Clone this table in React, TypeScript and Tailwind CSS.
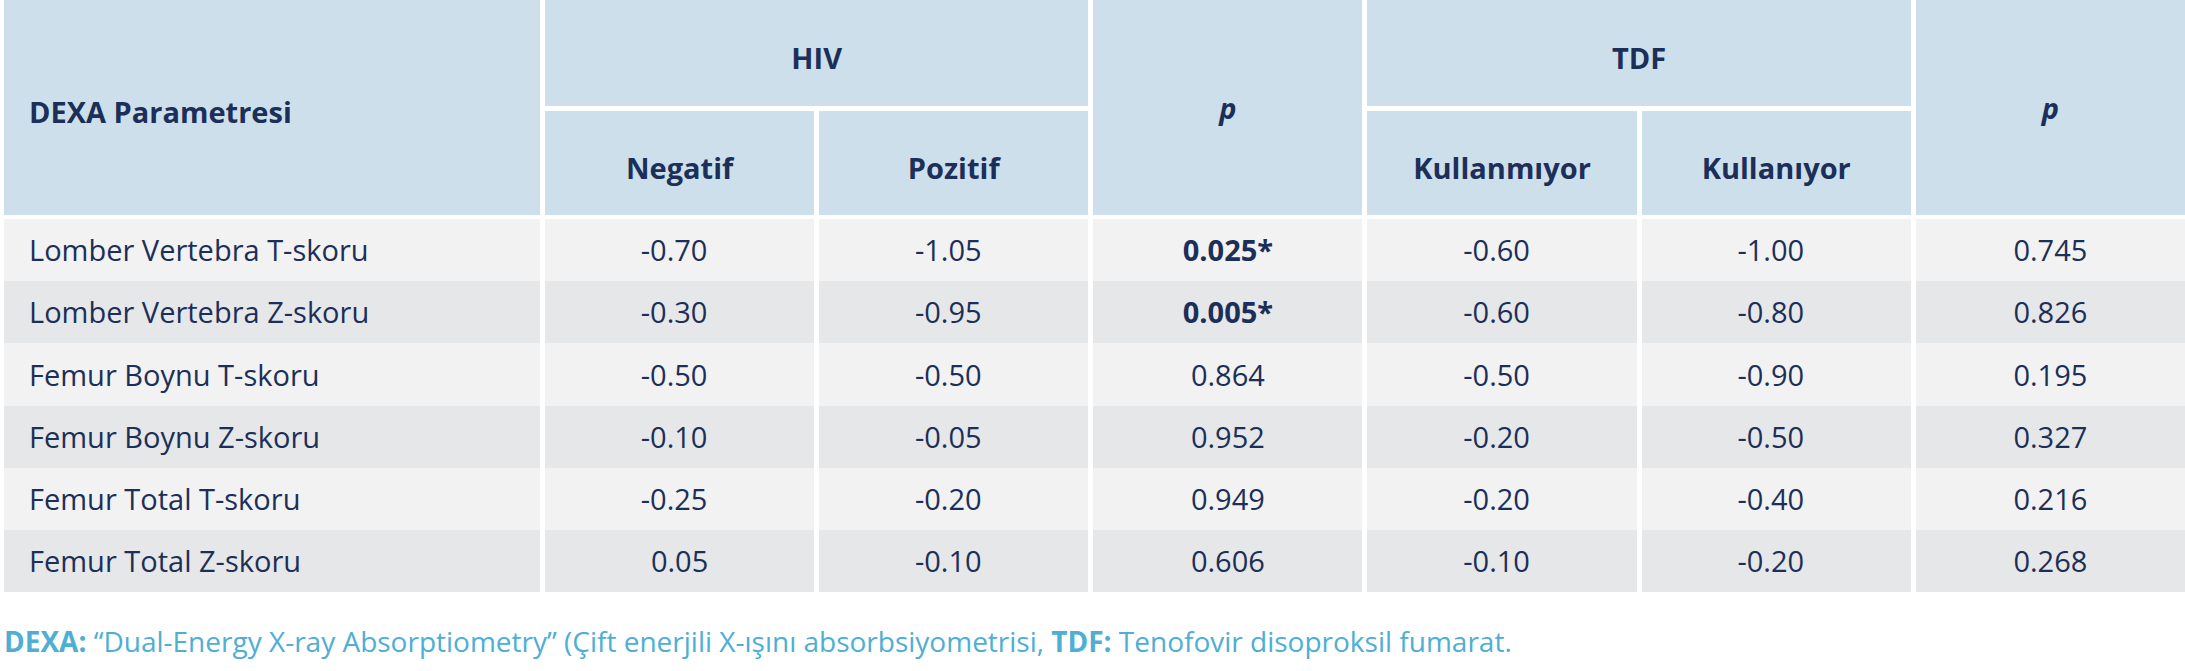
import React from 'react';

type Row = {
  label: string;
  values: string[];
  boldP?: boolean;
};

const rows: Row[] = [
  { label: 'Lomber Vertebra T-skoru', values: ['-0.70', '-1.05', '0.025*', '-0.60', '-1.00', '0.745'], boldP: true },
  { label: 'Lomber Vertebra Z-skoru', values: ['-0.30', '-0.95', '0.005*', '-0.60', '-0.80', '0.826'], boldP: true },
  { label: 'Femur Boynu T-skoru', values: ['-0.50', '-0.50', '0.864', '-0.50', '-0.90', '0.195'] },
  { label: 'Femur Boynu Z-skoru', values: ['-0.10', '-0.05', '0.952', '-0.20', '-0.50', '0.327'] },
  { label: 'Femur Total T-skoru', values: ['-0.25', '-0.20', '0.949', '-0.20', '-0.40', '0.216'] },
  { label: 'Femur Total Z-skoru', values: ['0.05', '-0.10', '0.606', '-0.10', '-0.20', '0.268'] },
];

const App: React.FC = () => {
  return (
    <div
      className="w-[2185px] h-[671px] bg-white text-[#1c2f58] overflow-hidden"
      style={{ fontFamily: '"Open Sans", "Noto Sans", sans-serif' }}
    >
      <div className="ml-[4px] text-[29px]">
        {/* header */}
        <div className="grid grid-cols-[536px_repeat(6,1fr)] grid-rows-[106px_104px] gap-x-[5px] gap-y-[5px] font-bold">
          <div className="row-span-2 bg-[#cddfeb] flex items-center pl-[25px] pt-[8px]">DEXA Parametresi</div>
          <div className="col-span-2 bg-[#cddfeb] flex items-center justify-center pt-[9px]">HIV</div>
          <div className="row-span-2 bg-[#cddfeb] flex items-center justify-center italic">p</div>
          <div className="col-span-2 bg-[#cddfeb] flex items-center justify-center pt-[9px]">TDF</div>
          <div className="row-span-2 bg-[#cddfeb] flex items-center justify-center italic">p</div>
          <div className="col-start-2 row-start-2 bg-[#cddfeb] flex items-center justify-center pt-[10px]">Negatif</div>
          <div className="col-start-3 row-start-2 bg-[#cddfeb] flex items-center justify-center pt-[10px]">Pozitif</div>
          <div className="col-start-5 row-start-2 bg-[#cddfeb] flex items-center justify-center pt-[10px]">Kullanmıyor</div>
          <div className="col-start-6 row-start-2 bg-[#cddfeb] flex items-center justify-center pt-[10px]">Kullanıyor</div>
        </div>

        {/* body */}
        <div className="mt-[4px] h-[373px] grid grid-rows-6">
          {rows.map((row, i) => (
            <div key={row.label} className="grid grid-cols-[536px_repeat(6,1fr)] gap-x-[5px]">
              <div className={`flex items-center pl-[25px] ${i % 2 === 0 ? 'bg-[#f2f2f2]' : 'bg-[#e6e7e8]'}`}>
                {row.label}
              </div>
              {row.values.map((v, j) => (
                <div
                  key={j}
                  className={`flex items-center justify-center ${i % 2 === 0 ? 'bg-[#f2f2f2]' : 'bg-[#e6e7e8]'} ${
                    v.startsWith('-') ? 'pr-[11px]' : ''
                  } ${j === 2 && row.boldP ? 'font-bold' : ''}`}
                >
                  {v}
                </div>
              ))}
            </div>
          ))}
        </div>
      </div>

      {/* footnote */}
      <p className="mt-[28px] pl-[4px] text-[28px] text-[#4eaed3] whitespace-nowrap">
        <span className="font-bold">DEXA:</span> “Dual-Energy X-ray Absorptiometry” (Çift enerjili X-ışını absorbsiyometrisi,{' '}
        <span className="font-bold">TDF:</span> Tenofovir disoproksil fumarat.
      </p>
    </div>
  );
};

export default App;
